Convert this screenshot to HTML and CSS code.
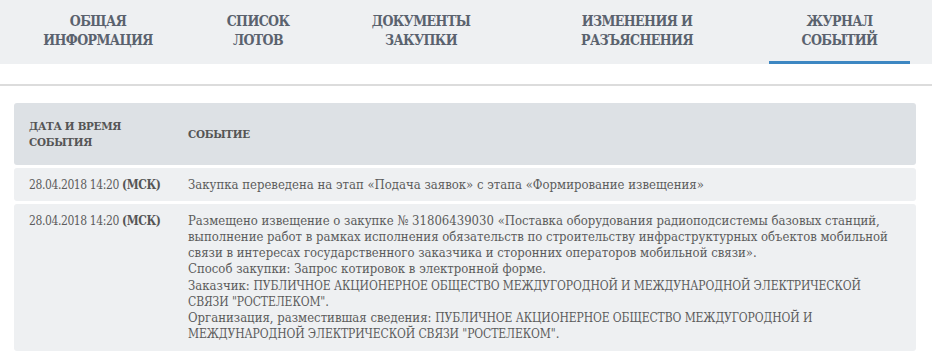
FILE: index.html
```html
<!DOCTYPE html>
<html lang="ru">
<head>
    <meta charset="UTF-8">
    <link rel="stylesheet" href="styles.css">
</head>
<body>
    <div class="tabs">
        <a class="tab">Общая<br>информация</a>
        <a class="tab">Список<br>лотов</a>
        <a class="tab">Документы<br>закупки</a>
        <a class="tab">Изменения и<br>разъяснения</a>
        <a class="tab active">Журнал<br>событий</a>
    </div>
    <div class="divider"></div>

    <div class="events">
        <div class="events-row events-head">
            <div class="col-date">Дата и время<br>события</div>
            <div class="col-event">Событие</div>
        </div>
        <div class="events-row">
            <div class="col-date">28.04.2018 14:20 <b>(МСК)</b></div>
            <div class="col-event">Закупка переведена на этап «Подача заявок» с этапа «Формирование извещения»</div>
        </div>
        <div class="events-row">
            <div class="col-date">28.04.2018 14:20 <b>(МСК)</b></div>
            <div class="col-event">Размещено извещение о закупке № 31806439030 «Поставка оборудования радиоподсистемы базовых станций, выполнение работ в рамках исполнения обязательств по строительству инфраструктурных объектов мобильной связи в интересах государственного заказчика и сторонних операторов мобильной связи».<br>Способ закупки: Запрос котировок в электронной форме.<br>Заказчик: <span class="caps">ПУБЛИЧНОЕ АКЦИОНЕРНОЕ ОБЩЕСТВО МЕЖДУГОРОДНОЙ И МЕЖДУНАРОДНОЙ ЭЛЕКТРИЧЕСКОЙ СВЯЗИ "РОСТЕЛЕКОМ"</span>.<br>Организация, разместившая сведения: <span class="caps">ПУБЛИЧНОЕ АКЦИОНЕРНОЕ ОБЩЕСТВО МЕЖДУГОРОДНОЙ И МЕЖДУНАРОДНОЙ ЭЛЕКТРИЧЕСКОЙ СВЯЗИ "РОСТЕЛЕКОМ"</span>.</div>
        </div>
    </div>
</body>
</html>
```

FILE: styles.css
```css
body {
    margin: 0;
    background: #fff;
    font-family: "DejaVu Serif Condensed", "DejaVu Serif", serif;
    color: #5c5c5c;
}

.tabs {
    display: grid;
    grid-template-columns: 162px 158px 168px 264px 141px;
    padding-left: 17px;
    height: 64px;
    background: #eef0f2;
}
.tab {
    display: flex;
    align-items: center;
    justify-content: center;
    text-align: center;
    text-transform: uppercase;
    font-weight: bold;
    font-size: 14px;
    letter-spacing: -0.6px;
    line-height: 19px;
    color: #5a626e;
    padding-bottom: 3px;
    box-sizing: border-box;
    cursor: pointer;
}
.tab.active {
    border-bottom: 3px solid #3d87c2;
    padding-bottom: 0;
}

.divider {
    height: 2px;
    margin-top: 20px;
    background: #dcdcdc;
}

.events {
    margin: 17px 16px 0 14px;
    display: flex;
    flex-direction: column;
    gap: 3px;
    font-size: 13px;
    line-height: 16.2px;
}
.events-row {
    display: flex;
    background: #eef0f2;
    border-radius: 3px;
    padding: 8.5px 0;
}
.events-head {
    background: #dde1e5;
    font-weight: bold;
    font-size: 11.5px;
    letter-spacing: -0.3px;
    text-transform: uppercase;
    color: #555;
    align-items: center;
    min-height: 45px;
}
.col-date {
    width: 174px;
    flex-shrink: 0;
    padding-left: 15px;
    box-sizing: border-box;
    white-space: nowrap;
    font-size: 12px;
    letter-spacing: -0.4px;
}
.events-head .col-date {
    white-space: normal;
    font-size: 11.5px;
    letter-spacing: -0.3px;
}
.col-event {
    flex: 1;
    padding-right: 18px;
}
.col-date b {
    font-weight: bold;
    color: #555;
}
.caps {
    font-size: 12px;
    letter-spacing: -0.1px;
}
```
